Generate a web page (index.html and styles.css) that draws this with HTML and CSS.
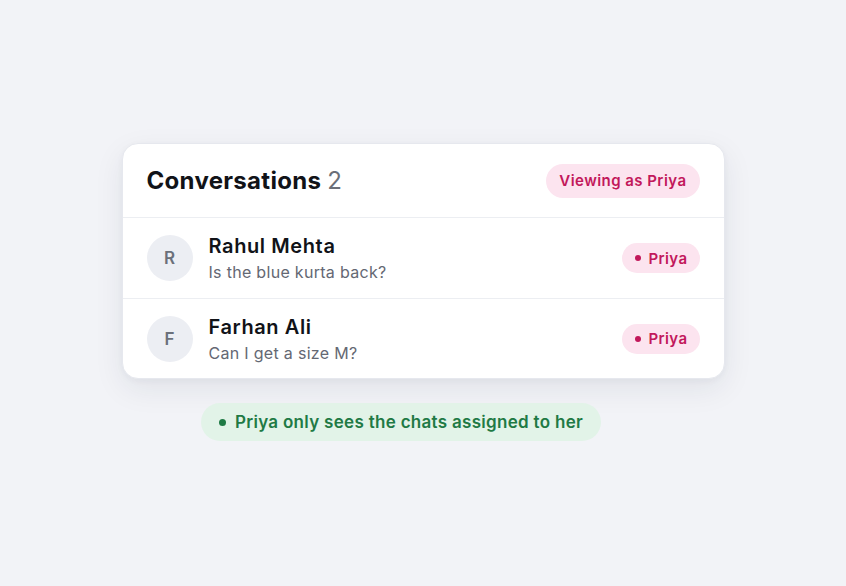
FILE: index.html
```html
<!DOCTYPE html>
<html>
<head>
<meta charset="utf-8">
<link rel="stylesheet" href="styles.css">
</head>
<body>
<main class="stage">
  <section class="card">
    <header class="card-head">
      <h1 class="title">Conversations <span class="count">2</span></h1>
      <span class="viewing">Viewing as Priya</span>
    </header>
    <div class="row">
      <div class="avatar">R</div>
      <div class="info">
        <div class="name">Rahul Mehta</div>
        <div class="msg">Is the blue kurta back?</div>
      </div>
      <span class="tag"><span class="dot"></span>Priya</span>
    </div>
    <div class="row">
      <div class="avatar">F</div>
      <div class="info">
        <div class="name">Farhan Ali</div>
        <div class="msg">Can I get a size M?</div>
      </div>
      <span class="tag"><span class="dot"></span>Priya</span>
    </div>
  </section>
  <div class="note"><span class="gdot"></span>Priya only sees the chats assigned to her</div>
</main>
</body>
</html>
```
FILE: styles.css
```css
* { box-sizing: border-box; }
html, body { margin: 0; padding: 0; }
body {
  background: #f2f3f7;
  font-family: Inter, "Noto Sans", sans-serif;
  width: 846px;
  height: 586px;
  overflow: hidden;
}
.stage {
  height: 586px;
  display: flex;
  flex-direction: column;
  align-items: center;
  justify-content: center;
  gap: 24px;
  padding-bottom: 2px;
}
.card {
  width: 603px;
  background: #fff;
  border-radius: 16px;
  border: 1px solid #e6e8ee;
  box-shadow: 0 10px 30px rgba(30, 40, 70, 0.08), 0 2px 6px rgba(30, 40, 70, 0.04);
  overflow: hidden;
}
.card-head {
  height: 74px;
  display: flex;
  align-items: center;
  justify-content: space-between;
  padding: 0 24px 0 24px;
  border-bottom: 1px solid #eceef2;
}
.title {
  margin: 0;
  font-size: 24px;
  font-weight: 700;
  color: #111318;
  letter-spacing: 0.3px;
}
.count {
  font-weight: 400;
  color: #6b6f78;
}
.viewing {
  height: 34px;
  padding: 0 13px;
  display: flex;
  align-items: center;
  border-radius: 17px;
  background: #fce4ef;
  color: #c2185b;
  font-size: 15px;
  font-weight: 600;
  letter-spacing: 0.45px;
}
.row {
  height: 80px;
  display: flex;
  align-items: center;
  padding: 0 24px;
  gap: 16px;
}
.row + .row { border-top: 1px solid #eceef2; }
.avatar {
  width: 46px;
  height: 46px;
  border-radius: 50%;
  background: #eceef3;
  color: #6b707a;
  display: flex;
  align-items: center;
  justify-content: center;
  font-size: 17px;
  font-weight: 600;
  flex: none;
}
.info { flex: 1; display: flex; flex-direction: column; gap: 3px; padding-top: 1px; }
.name {
  font-size: 20px;
  font-weight: 600;
  color: #111318;
  line-height: 24px;
  letter-spacing: 0.6px;
}
.msg {
  font-size: 16px;
  color: #646873;
  line-height: 22px;
  letter-spacing: 0.3px;
}
.tag {
  height: 30px;
  padding: 0 12px 0 13px;
  border-radius: 15px;
  background: #fce4ef;
  color: #c2185b;
  font-size: 15px;
  font-weight: 600;
  letter-spacing: 0.4px;
  display: flex;
  align-items: center;
  gap: 7px;
}
.dot {
  width: 6px;
  height: 6px;
  border-radius: 50%;
  background: #c2185b;
}
.note {
  height: 38px;
  margin-right: 44px;
  padding: 0 18px 0 18px;
  border-radius: 19px;
  background: #e2f3e8;
  color: #1f7a45;
  font-size: 17px;
  font-weight: 600;
  letter-spacing: 0.3px;
  display: flex;
  align-items: center;
  gap: 9px;
}
.gdot {
  width: 7px;
  height: 7px;
  border-radius: 50%;
  background: #1f7a45;
}
```
